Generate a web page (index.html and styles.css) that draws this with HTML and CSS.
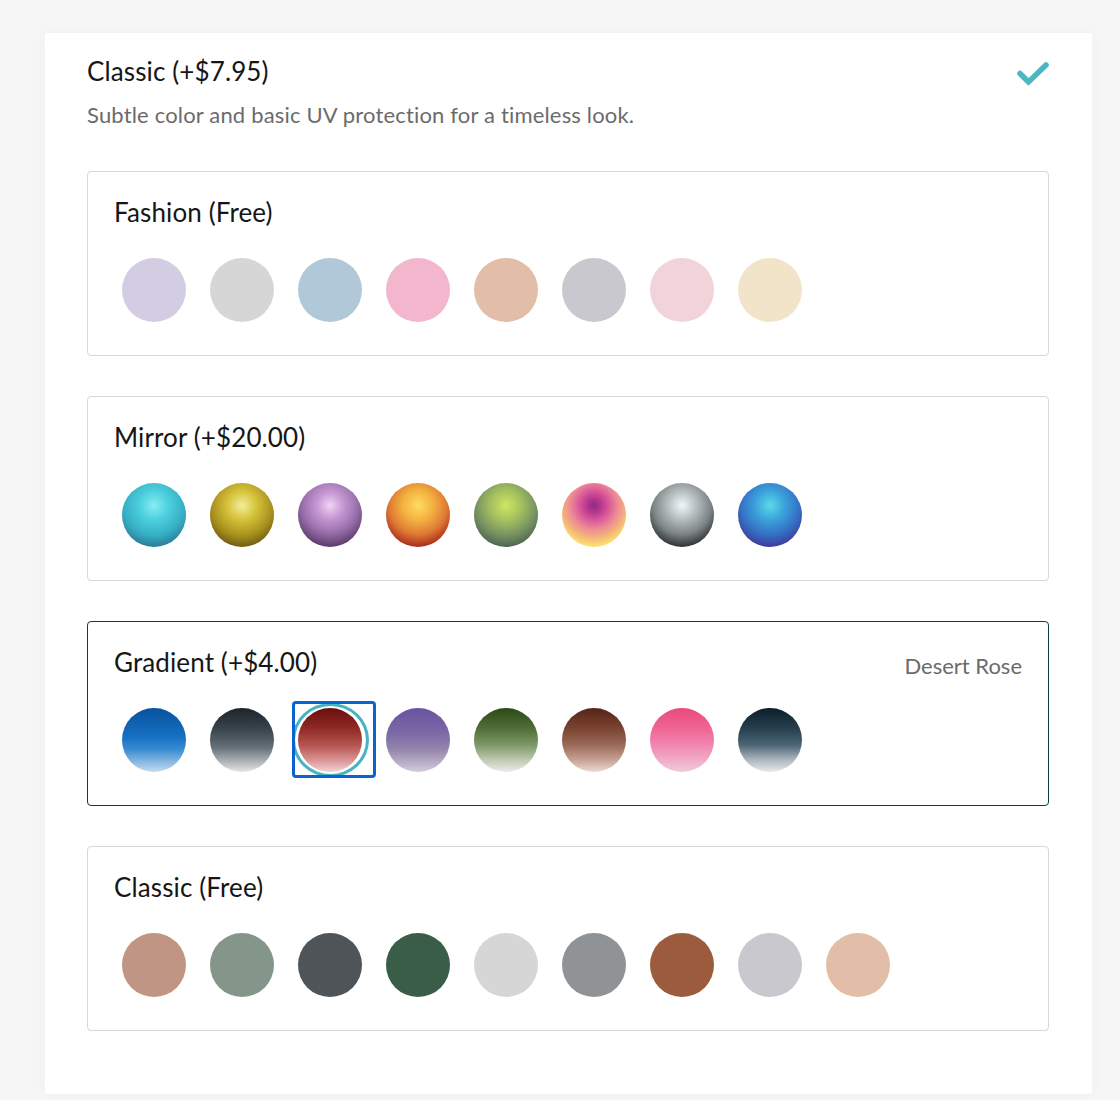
FILE: index.html
```html
<!DOCTYPE html>
<html lang="en">
<head>
<meta charset="utf-8">
<title>Lens options</title>
<link rel="stylesheet" href="styles.css">
</head>
<body>
<div class="page">
  <section class="card">
    <header class="card-head">
      <h1 class="card-title">Classic (+$7.95)</h1>
      <svg class="check" width="34" height="26" viewBox="0 0 34 26" aria-hidden="true">
        <polyline points="4,12.5 12.5,21 30,4" fill="none" stroke="#4bb7c3" stroke-width="5.5" stroke-linecap="round" stroke-linejoin="miter"/>
      </svg>
    </header>
    <p class="card-sub">Subtle color and basic UV protection for a timeless look.</p>

    <div class="group">
      <div class="group-head"><h2 class="group-title">Fashion (Free)</h2></div>
      <div class="swatches">
        <span class="sw" style="background:#d3cde3"></span>
        <span class="sw" style="background:#d6d6d6"></span>
        <span class="sw" style="background:#b0c8d7"></span>
        <span class="sw" style="background:#f2b7cc"></span>
        <span class="sw" style="background:#e2bda7"></span>
        <span class="sw" style="background:#c8c8ce"></span>
        <span class="sw" style="background:#f2d3da"></span>
        <span class="sw" style="background:#f1e4c9"></span>
      </div>
    </div>

    <div class="group">
      <div class="group-head"><h2 class="group-title">Mirror (+$20.00)</h2></div>
      <div class="swatches">
        <span class="sw" style="background:radial-gradient(circle at 50% 35%, #86eef4 0%, #4cd0dd 28%, #35aec4 58%, #2a7b94 80%)"></span>
        <span class="sw" style="background:radial-gradient(circle at 50% 35%, #f4ee9c 0%, #d6c23a 28%, #a8901e 58%, #6f5a14 80%)"></span>
        <span class="sw" style="background:radial-gradient(circle at 50% 35%, #f0d6f6 0%, #c89ad4 24%, #9a70ac 52%, #5a3868 80%)"></span>
        <span class="sw" style="background:radial-gradient(circle at 50% 35%, #fedc62 0%, #f4b340 28%, #de7a34 55%, #a8281c 80%)"></span>
        <span class="sw" style="background:radial-gradient(circle at 50% 35%, #cfe666 0%, #a7c25e 28%, #7a9662 55%, #4c6450 80%)"></span>
        <span class="sw" style="background:radial-gradient(circle at 50% 35%, #8e2a82 0%, #b8388e 14%, #dc5c9a 30%, #ec8a94 45%, #f4b07c 60%, #fbde70 76%)"></span>
        <span class="sw" style="background:radial-gradient(circle at 50% 35%, #eef8fa 0%, #b8c0c2 26%, #7c8486 55%, #2c3032 80%)"></span>
        <span class="sw" style="background:radial-gradient(circle at 50% 35%, #5adce8 0%, #3ca2dc 28%, #3470c4 56%, #40389a 80%)"></span>
      </div>
    </div>

    <div class="group group-active">
      <div class="group-head">
        <h2 class="group-title">Gradient (+$4.00)</h2>
        <span class="group-pick">Desert Rose</span>
      </div>
      <div class="swatches">
        <span class="sw" style="background:linear-gradient(#0852a0 0%, #1670c2 45%, #3a8cd2 65%, #c6dcee 100%)"></span>
        <span class="sw" style="background:linear-gradient(#1c242c 0%, #3c464e 35%, #66707a 62%, #e6e6e6 100%)"></span>
        <span class="sw sw-selected" style="background:linear-gradient(#66100e 0%, #8e2824 30%, #b45450 58%, #d89090 80%, #f2d2d6 100%)"></span>
        <span class="sw" style="background:linear-gradient(#6a52a2 0%, #7c68a6 38%, #9486ac 65%, #d4ccdc 100%)"></span>
        <span class="sw" style="background:linear-gradient(#2c4a16 0%, #506e38 32%, #7e9868 58%, #c2ccb4 82%, #ececec 100%)"></span>
        <span class="sw" style="background:linear-gradient(#54241a 0%, #7a4432 32%, #9c6a58 58%, #c8a496 82%, #ecdad6 100%)"></span>
        <span class="sw" style="background:linear-gradient(#e84a78 0%, #f06898 35%, #f28cb4 62%, #f0cad8 100%)"></span>
        <span class="sw" style="background:linear-gradient(#0c1e2a 0%, #26404e 32%, #4c6676 58%, #a8b4bc 80%, #eaeaea 100%)"></span>
      </div>
    </div>

    <div class="group">
      <div class="group-head"><h2 class="group-title">Classic (Free)</h2></div>
      <div class="swatches">
        <span class="sw" style="background:#c09584"></span>
        <span class="sw" style="background:#84968a"></span>
        <span class="sw" style="background:#4e5458"></span>
        <span class="sw" style="background:#3a5d48"></span>
        <span class="sw" style="background:#d6d6d6"></span>
        <span class="sw" style="background:#909396"></span>
        <span class="sw" style="background:#9c5b3d"></span>
        <span class="sw" style="background:#c8c8ce"></span>
        <span class="sw" style="background:#e2bda7"></span>
      </div>
    </div>
  </section>
</div>
</body>
</html>
```

FILE: styles.css
```css
* { box-sizing: border-box; }

html, body {
  margin: 0;
  padding: 0;
  background: #f6f6f6;
}

body {
  font-family: Lato, "Open Sans", "Liberation Sans", sans-serif;
  color: #1a1a1a;
}

.page {
  padding: 33px 28px 8px 45px;
}

.card {
  background: #ffffff;
  box-shadow: 0 0 14px rgba(0, 0, 0, 0.03);
  padding: 23px 43px 63px 42px;
}

.card-head {
  display: flex;
  justify-content: space-between;
  align-items: flex-start;
}

.card-title {
  margin: 0;
  font-size: 26px;
  line-height: 31px;
  font-weight: 400;
  letter-spacing: 0.12px;
  color: #161616;
}

.check {
  display: block;
  margin-top: 5px;
  margin-right: -1px;
}

.card-sub {
  margin: 15px 0 0;
  font-size: 22px;
  line-height: 26px;
  letter-spacing: 0.17px;
  color: #6b6b6b;
}

.group {
  margin-top: 40px;
  border: 1px solid #d7d7d7;
  border-radius: 4px;
  padding: 25px 26px 33px;
}

.card-sub + .group {
  margin-top: 43px;
}

.group-active {
  border-color: #0f3c40;
}

.group-head {
  display: flex;
  justify-content: space-between;
  align-items: baseline;
}

.group-title {
  margin: 0;
  font-size: 26px;
  line-height: 31px;
  font-weight: 400;
  letter-spacing: 0.12px;
  color: #161616;
}

.group-pick {
  font-size: 22px;
  color: #6b6b6b;
  position: relative;
  top: 2px;
}

.swatches {
  display: flex;
  gap: 24px;
  margin-top: 30px;
  padding-left: 8px;
}

.sw {
  display: block;
  width: 64px;
  height: 64px;
  border-radius: 50%;
  flex: none;
}

.sw-selected {
  position: relative;
}

.sw-selected::before {
  content: "";
  position: absolute;
  left: -6px;
  right: -7px;
  top: -5px;
  bottom: -5px;
  border: 3px solid #46b5c1;
  border-radius: 50%;
}

.sw-selected::after {
  content: "";
  position: absolute;
  left: -6px;
  right: -14px;
  top: -7px;
  bottom: -6px;
  border: 3px solid #0a63cf;
  border-radius: 4px;
}
```
